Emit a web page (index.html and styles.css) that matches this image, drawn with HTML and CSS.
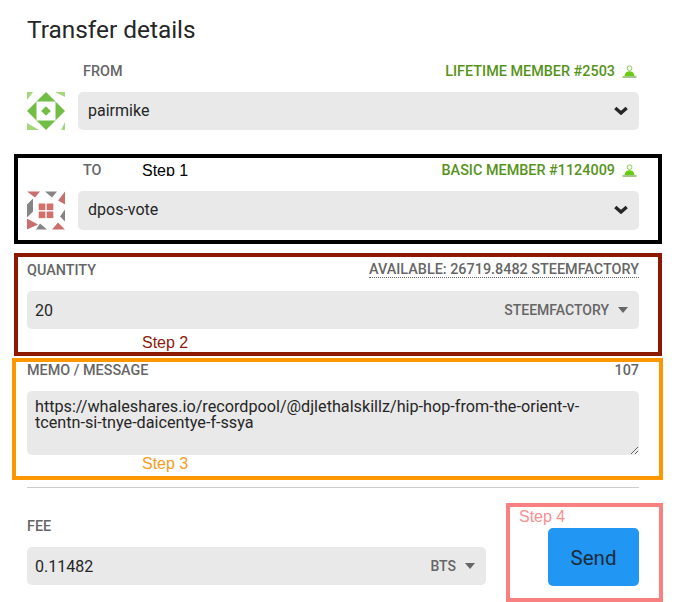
FILE: index.html
```html
<!DOCTYPE html>
<html lang="en">
<head>
    <meta charset="UTF-8">
    <meta name="viewport" content="width=device-width, initial-scale=1.0">
    <title>Transfer details</title>
    <link rel="stylesheet" href="styles.css">
</head>
<body>
    <h1>Transfer details</h1>

    <div class="from-row">
        <div class="label-row with-avatar">
            <span class="label">FROM</span>
            <span class="member">LIFETIME MEMBER #2503
                <svg class="member-icon" viewBox="0 0 15 13"><circle cx="7.5" cy="3.2" r="2.4" fill="none" stroke="#8fd14f" stroke-width="1"/><path d="M2.5 11 C3 7.5 5 6.2 7.5 6.2 C10 6.2 12 7.5 12.5 11 Z" fill="#66cc11"/><path d="M0.5 12 H14.5" stroke="#4d8c12" stroke-width="1"/></svg>
            </span>
        </div>
        <div class="account-row">
            <svg class="avatar" viewBox="0 0 38 38">
                <rect width="38" height="38" fill="#fff"/>
                <path d="M0 0 H6 L0 8 Z M28 0 H38 V5 Z M0 31 L12 38 H0 Z M38 30 V38 H34 Z" fill="#a5d67c"/>
                <path d="M19 0 L38 19 L19 38 L0 19 Z" fill="#72bd46"/>
                <rect x="9.5" y="9.5" width="19" height="19" fill="#fff"/>
                <path d="M19 14.2 L23.8 19 L19 23.8 L14.2 19 Z" fill="#72bd46"/>
            </svg>
            <div class="select-box">
                <span>pairmike</span>
                <svg class="chevron" viewBox="0 0 14 9"><path d="M1.3 2 L7 7 L12.7 2" fill="none" stroke="#262626" stroke-width="3.4"/></svg>
            </div>
        </div>
    </div>

    <section class="step-box step-black">
        <span class="step-tag tag-one">Step 1</span>
        <div class="label-row with-avatar">
            <span class="label">TO</span>
            <span class="member">BASIC MEMBER #1124009
                <svg class="member-icon" viewBox="0 0 15 13"><circle cx="7.5" cy="3.2" r="2.4" fill="none" stroke="#8fd14f" stroke-width="1"/><path d="M2.5 11 C3 7.5 5 6.2 7.5 6.2 C10 6.2 12 7.5 12.5 11 Z" fill="#66cc11"/><path d="M0.5 12 H14.5" stroke="#4d8c12" stroke-width="1"/></svg>
            </span>
        </div>
        <div class="account-row">
            <svg class="avatar" viewBox="0 0 38 38">
                <rect width="38" height="38" fill="#fff"/>
                <path d="M0 0 H13 L8 6 Z M38 0 V13 L31 9 Z M38 38 H25 L31 31 Z M0 27 L11 33 L0 38 Z" fill="#c96f6f"/>
                <path d="M18 0 H30 L25 6 Z M38 18 V30 L33 25 Z M20 38 H9 L13 32 Z M0 13 L6 7 V20 L0 26 Z" fill="#858585"/>
                <rect x="11.7" y="12" width="6.6" height="6.6" fill="#d46f6a"/>
                <rect x="19.7" y="12" width="6.6" height="6.6" fill="#d46f6a"/>
                <rect x="11.7" y="20" width="6.6" height="6.6" fill="#d46f6a"/>
                <rect x="19.7" y="20" width="6.6" height="6.6" fill="#d46f6a"/>
            </svg>
            <div class="select-box">
                <span>dpos-vote</span>
                <svg class="chevron" viewBox="0 0 14 9"><path d="M1.3 2 L7 7 L12.7 2" fill="none" stroke="#262626" stroke-width="3.4"/></svg>
            </div>
        </div>
    </section>

    <section class="step-box step-red">
        <div class="label-row">
            <span class="label">QUANTITY</span>
            <span class="label available">AVAILABLE: 26719.8482 STEEMFACTORY</span>
        </div>
        <div class="input-box">
            <span>20</span>
            <span class="asset">STEEMFACTORY <i class="caret"></i></span>
        </div>
        <span class="step-tag tag-two">Step 2</span>
    </section>

    <section class="step-box step-orange">
        <div class="label-row">
            <span class="label">MEMO / MESSAGE</span>
            <span class="label">107</span>
        </div>
        <textarea class="memo" spellcheck="false">https://whaleshares.io/recordpool/@djlethalskillz/hip-hop-from-the-orient-v-tcentn-si-tnye-daicentye-f-ssya</textarea>
        <span class="step-tag tag-three">Step 3</span>
    </section>

    <hr class="divider">

    <div class="bottom-row">
        <div class="fee">
            <span class="label">FEE</span>
            <div class="input-box">
                <span>0.11482</span>
                <span class="asset">BTS <i class="caret"></i></span>
            </div>
        </div>
        <section class="step-send">
            <span class="step-tag tag-four">Step 4</span>
            <button class="send">Send</button>
        </section>
    </div>
</body>
</html>
```

FILE: styles.css
```css
* {
    box-sizing: border-box;
}
html, body {
    height: 602px;
    overflow: hidden;
}
body {
    margin: 0;
    font-family: Roboto, "Liberation Sans", sans-serif;
    color: #262626;
    background-color: #fff;
}
h1 {
    margin: 0;
    padding: 15px 0 0 27px;
    height: 63px;
    font-size: 24.4px;
    line-height: 30px;
    font-weight: 400;
}
.from-row {
    height: 76px;
    padding: 0 42px 0 27px;
}
.label-row {
    display: flex;
    justify-content: space-between;
    align-items: center;
    height: 16px;
    margin-bottom: 13px;
}
.with-avatar {
    padding-left: 56px;
}
.label {
    font-size: 14.4px;
    font-weight: 500;
    color: #666;
}
.member {
    display: flex;
    align-items: center;
    gap: 7px;
    font-size: 14.4px;
    font-weight: 500;
    color: #56931a;
}
.member-icon {
    width: 15px;
    height: 13px;
    margin-right: 2px;
}
.account-row {
    display: flex;
    gap: 13px;
}
.avatar {
    width: 38px;
    height: 38px;
    flex: none;
}
.select-box, .input-box {
    flex: 1;
    display: flex;
    justify-content: space-between;
    align-items: center;
    height: 38px;
    background-color: #e9e9e9;
    border-radius: 5px;
    font-size: 16px;
}
.select-box {
    padding: 0 11px 2px 10px;
}
.input-box {
    padding: 0 11px 0 8px;
}
.chevron {
    width: 14px;
    height: 9px;
}
.asset {
    display: flex;
    align-items: center;
    gap: 9px;
    font-size: 14px;
    font-weight: 500;
    color: #666;
}
.caret {
    width: 0;
    height: 0;
    border-left: 5.5px solid transparent;
    border-right: 5.5px solid transparent;
    border-top: 6px solid #666;
}
.step-box {
    position: relative;
    margin-left: 14px;
    width: 648px;
    border: 4px solid #000;
    padding: 0 19px 0 9px;
}
.step-black {
    margin-top: 15px;
    height: 90px;
    padding-top: 4px;
}
.step-black .avatar, .step-black .select-box {
    height: 39px;
}
.step-red {
    margin-top: 9px;
    height: 103px;
    border-color: #8b1a00;
    padding-top: 5px;
}
.step-orange {
    margin-top: 2px;
    margin-left: 12px;
    width: 651px;
    height: 122px;
    border-color: #ff9800;
    padding: 0 20px 0 11px;
}
.step-tag {
    position: absolute;
    font-family: "Liberation Sans", Arial, sans-serif;
    font-size: 16px;
    line-height: 18px;
}
.tag-one {
    left: 124px;
    top: 4px;
    height: 14px;
    overflow: hidden;
    color: #000;
}
.tag-two {
    left: 124px;
    top: 77px;
    color: #8b1a0e;
}
.tag-three {
    left: 126px;
    top: 93px;
    color: #f39c1f;
}
.tag-four {
    left: 9px;
    top: 1px;
    color: #f98f8f;
}
.available {
    border-bottom: 1px dotted #666;
    line-height: 15px;
}
.memo {
    display: block;
    width: 100%;
    height: 64px;
    padding: 8px 20px 8px 8px;
    border: none;
    border-radius: 5px;
    outline: none;
    background-color: #e9e9e9;
    color: #262626;
    font-family: Roboto, "Liberation Sans", sans-serif;
    font-size: 16.2px;
    line-height: 16px;
    resize: vertical;
}
.divider {
    margin: 7px 42px 0 27px;
    height: 1px;
    border: none;
    background-color: #ccc;
}
.bottom-row {
    display: flex;
    margin-top: 15px;
    padding-left: 27px;
}
.fee {
    width: 459px;
    padding-top: 16px;
}
.fee .label {
    display: block;
    line-height: 16px;
    margin-bottom: 12px;
}
.step-send {
    position: relative;
    display: flex;
    justify-content: flex-end;
    margin-left: 20px;
    width: 157px;
    height: 99px;
    border: 4px solid #f98080;
    padding: 21px 20px 0 0;
}
.send {
    width: 91px;
    height: 58px;
    padding-top: 2px;
    border: none;
    border-radius: 5px;
    background-color: #2196f3;
    color: #1c2b3a;
    font-family: Roboto, "Liberation Sans", sans-serif;
    font-size: 20.5px;
}
```
